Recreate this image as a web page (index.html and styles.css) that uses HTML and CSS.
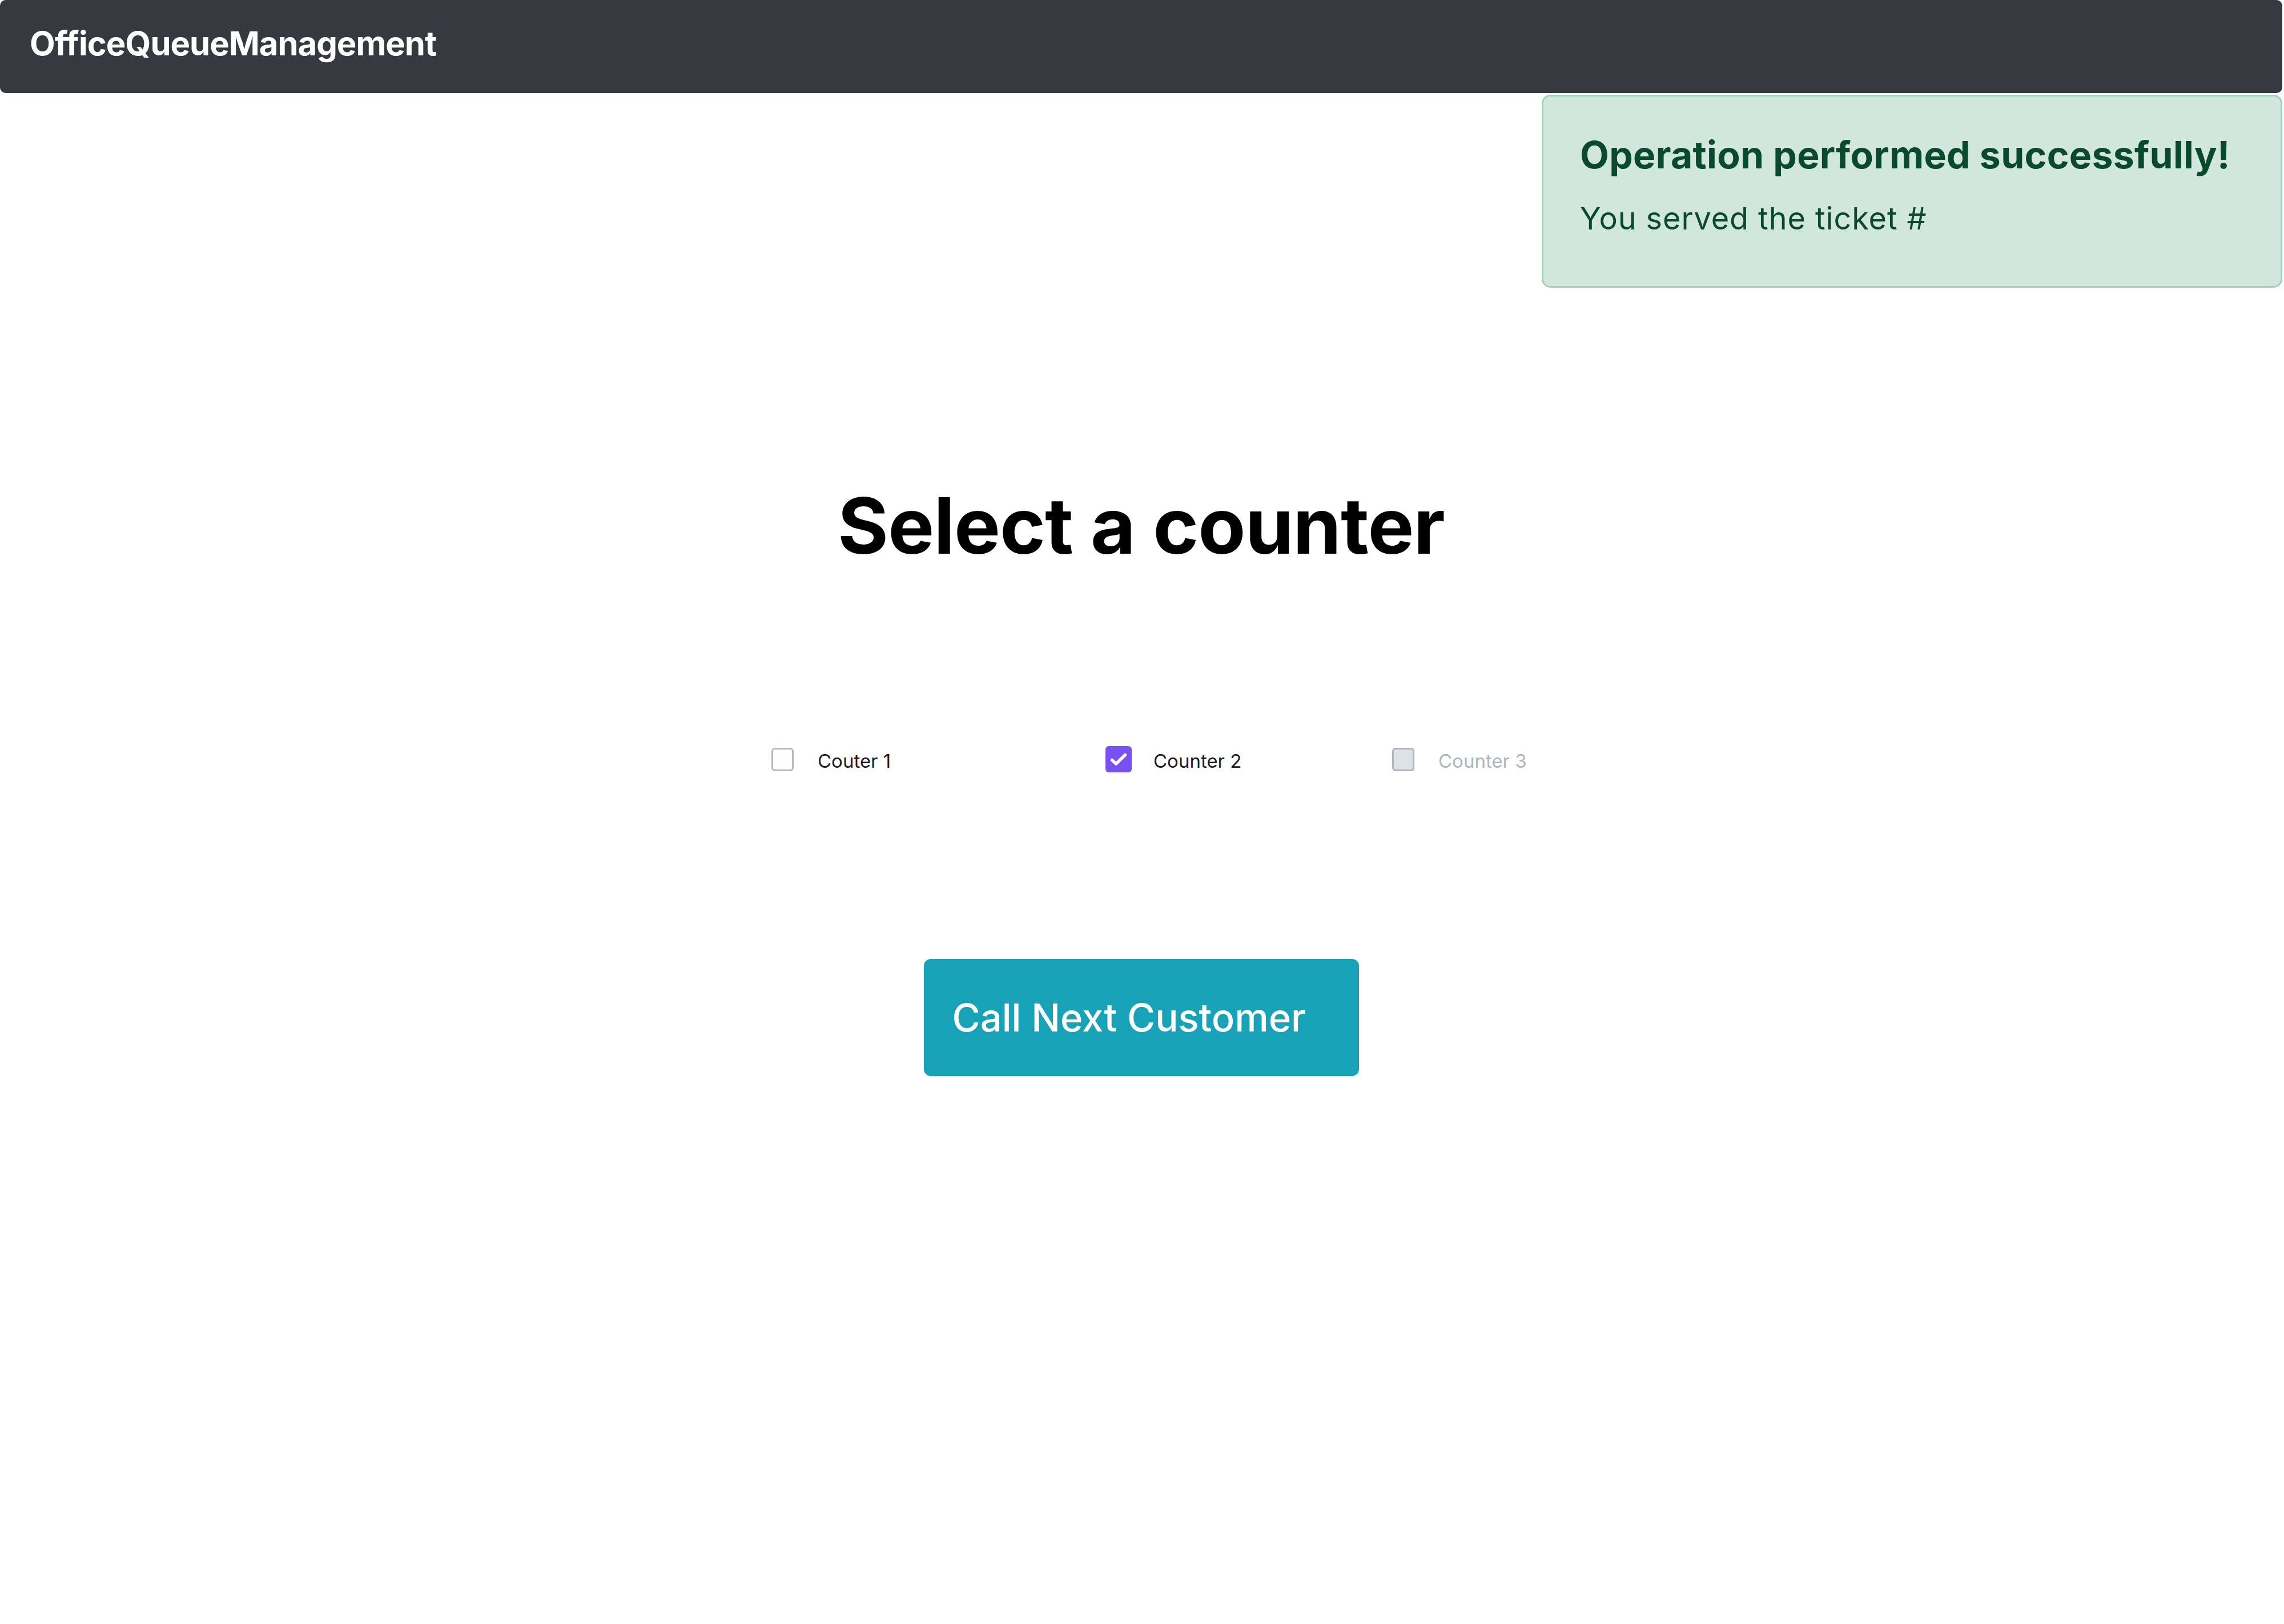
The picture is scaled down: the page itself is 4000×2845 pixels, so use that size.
FILE: index.html
```html
<!DOCTYPE html>
<html lang="en">
<head>
<meta charset="utf-8">
<title>OfficeQueueManagement</title>
<link rel="stylesheet" href="styles.css">
</head>
<body>
<nav class="navbar">
  <span class="brand">OfficeQueueManagement</span>
</nav>
<div class="alert">
  <h4 class="alert-heading">Operation performed successfully!</h4>
  <p class="alert-text">You served the ticket #</p>
</div>
<main class="main">
  <h1 class="title">Select a counter</h1>
  <div class="counters">
    <label class="check check-1">
      <span class="box"></span>
      <span class="label">Couter 1</span>
    </label>
    <label class="check check-2">
      <span class="box box-checked">
        <svg viewBox="0 0 46 46" width="46" height="46"><path d="M11.5 24.5L18.5 31L34.5 15.5" fill="none" stroke="#fff" stroke-width="5.5" stroke-linecap="round" stroke-linejoin="round"/></svg>
      </span>
      <span class="label">Counter 2</span>
    </label>
    <label class="check check-3">
      <span class="box box-disabled"></span>
      <span class="label label-disabled">Counter 3</span>
    </label>
  </div>
  <button class="btn">Call Next Customer</button>
</main>
</body>
</html>
```

FILE: styles.css
```css
html, body {
  margin: 0;
  padding: 0;
  background: #ffffff;
  font-family: Inter, "Noto Sans", "Liberation Sans", sans-serif;
}

body {
  position: relative;
  width: 3997px;
}

.navbar {
  height: 163px;
  background: #343a40;
  border-radius: 10px;
  box-sizing: border-box;
  padding: 41px 0 0 52px;
}

.brand {
  display: block;
  color: #ffffff;
  font-weight: 700;
  font-size: 58px;
  line-height: 70px;
  letter-spacing: -1px;
}

.alert {
  position: absolute;
  top: 166px;
  left: 2700px;
  width: 1297px;
  height: 338px;
  box-sizing: border-box;
  background: #d1e7dd;
  border: 3px solid #a3cfbb;
  border-radius: 15px;
  color: #0a4a2c;
  padding: 62px 64px 0 64px;
}

.alert-heading {
  margin: 0;
  font-size: 66px;
  font-weight: 700;
  line-height: 80px;
  letter-spacing: 0.3px;
}

.alert-text {
  margin: 32px 0 0 0;
  font-size: 54px;
  font-weight: 400;
  line-height: 80px;
  letter-spacing: 0.9px;
}

.main {
  display: flex;
  flex-direction: column;
  align-items: center;
  padding-top: 676px;
}

.title {
  margin: 0;
  font-size: 136px;
  font-weight: 700;
  line-height: 164px;
  color: #000000;
  letter-spacing: -1px;
}

.counters {
  margin-top: 302px;
  display: flex;
  align-items: center;
  padding-left: 26px;
}

.check {
  display: flex;
  align-items: center;
  gap: 42px;
  height: 50px;
  white-space: nowrap;
}

.check-1 { width: 586px; }
.check-2 { width: 501px; }
.check-3 { width: 234px; }

.box {
  width: 39px;
  height: 41px;
  box-sizing: border-box;
  border: 3px solid #b3bac1;
  border-radius: 6px;
  background: #ffffff;
  flex: none;
  display: flex;
  align-items: center;
  justify-content: center;
}

.box-checked {
  width: 46px;
  height: 46px;
  border: none;
  background: #7950f2;
  border-radius: 6px;
  margin-left: -1px;
  margin-right: -4px;
}

.box-disabled {
  background: #dee2e6;
  border-color: #adb5bd;
}

.label {
  font-size: 33px;
  line-height: 50px;
  color: #1a1d21;
  padding-top: 6px;
}

.label-disabled {
  color: #adb5bd;
}

.btn {
  margin-top: 325px;
  width: 762px;
  height: 205px;
  box-sizing: border-box;
  background: #17a2b8;
  color: #ffffff;
  border: none;
  border-radius: 12px;
  font-family: Inter, "Noto Sans", "Liberation Sans", sans-serif;
  font-size: 67px;
  font-weight: 500;
  text-align: left;
  padding: 0 0 0 50px;
  line-height: 80px;
}
```
